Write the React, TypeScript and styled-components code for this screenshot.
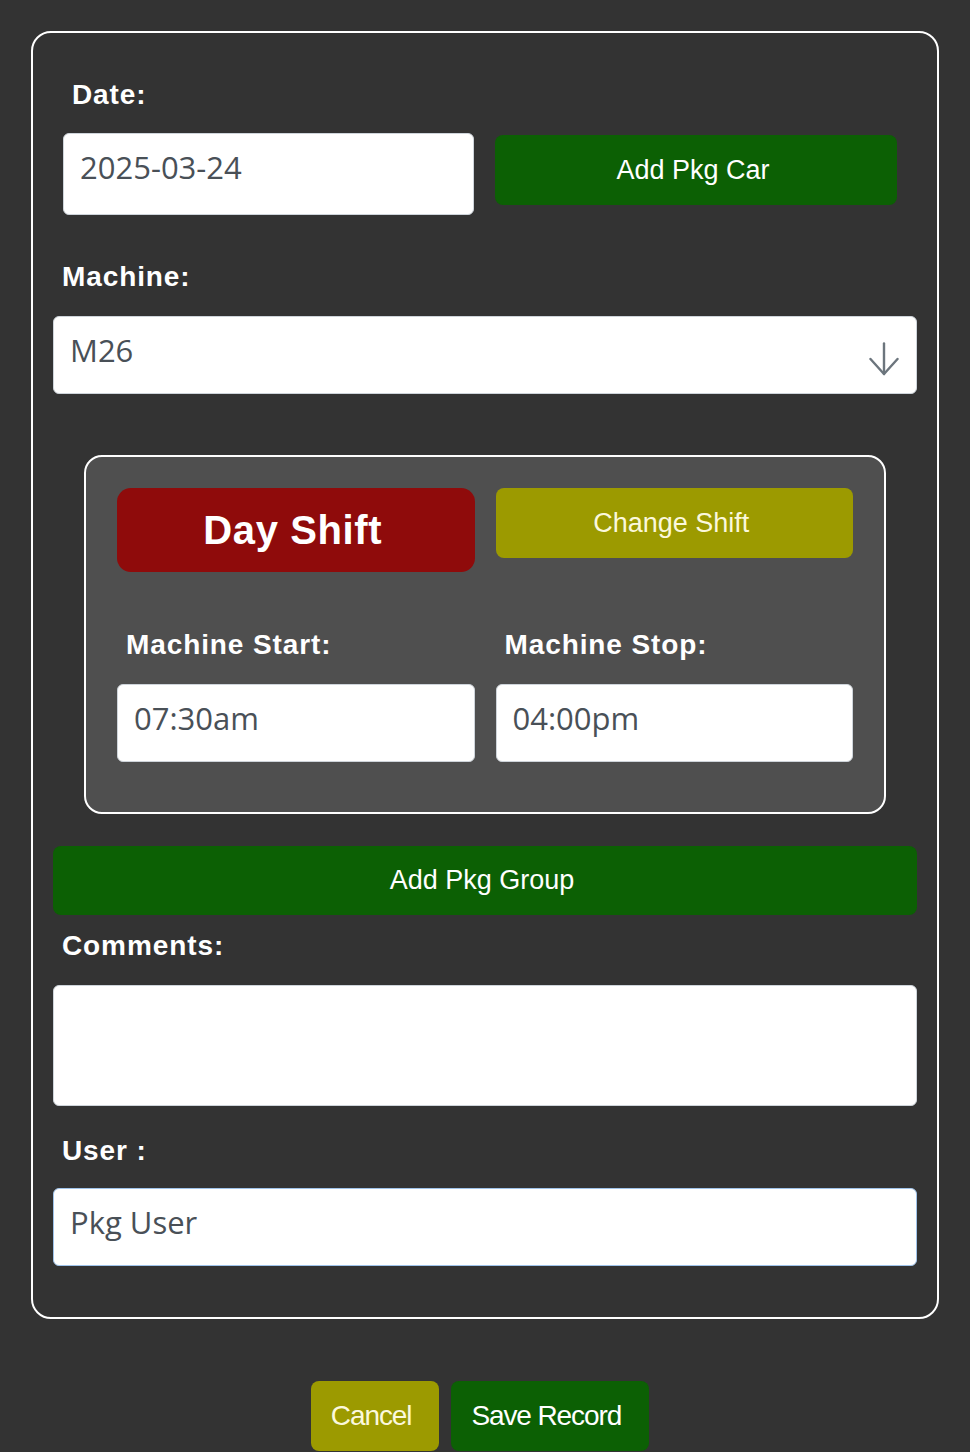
import React from "react";
import styled, { createGlobalStyle } from "styled-components";

const GlobalStyle = createGlobalStyle`
  html, body { margin: 0; padding: 0; background: #333333; }
  body { font-family: "Liberation Sans", Arial, sans-serif; }
  *, *::before, *::after { box-sizing: border-box; }
`;

const Page = styled.main`
  width: 970px;
  min-height: 1452px;
  padding: 31px 31px 0;
  background: #333333;
`;

const Card = styled.form`
  display: flex;
  flex-direction: column;
  border: 2px solid #ffffff;
  border-radius: 20px;
  padding: 46px 20px 51px;
`;

const Label = styled.label<{ $mt?: number }>`
  display: block;
  margin-top: ${(p) => p.$mt ?? 0}px;
  padding-left: 9px;
  font: bold 28px/32px "Liberation Sans", Arial, sans-serif;
  letter-spacing: 0.9px;
  color: #ffffff;
`;

const DateBlock = styled.section`
  padding: 0 10px;
`;

const DateRow = styled.div`
  display: grid;
  grid-template-columns: 411px 402px;
  column-gap: 21px;
  align-items: start;
  margin-top: 22px;
`;

const TextInput = styled.input<{ $h: number; $focus?: boolean }>`
  display: block;
  width: 100%;
  height: ${(p) => p.$h}px;
  padding: 12px 16px ${(p) => p.$h - 56}px;
  border: 1px solid ${(p) => (p.$focus ? "#9fc3ea" : "#ced4da")};
  border-radius: 6px;
  background: #ffffff;
  font: 400 31px/42px "Open Sans", "Noto Sans", sans-serif;
  color: #495057;
  outline: none;
`;

const TextArea = styled.textarea<{ $mt: number }>`
  display: block;
  width: 100%;
  height: 121px;
  margin-top: ${(p) => p.$mt}px;
  padding: 12px 16px;
  border: 1px solid #ced4da;
  border-radius: 6px;
  background: #ffffff;
  font: 400 31px/42px "Open Sans", "Noto Sans", sans-serif;
  color: #495057;
  resize: none;
  outline: none;
`;

const FieldSpace = styled.div<{ $mt: number }>`
  margin-top: ${(p) => p.$mt}px;
`;

const SelectWrap = styled.div`
  display: flex;
  align-items: center;
  height: 78px;
  margin-top: 23px;
  padding-right: 17px;
  border: 1px solid #ced4da;
  border-radius: 6px;
  background: #ffffff;
`;

const Select = styled.select`
  flex: 1;
  align-self: stretch;
  appearance: none;
  -webkit-appearance: none;
  border: none;
  background: transparent;
  padding: 12px 16px 22px;
  font: 400 31px/42px "Open Sans", "Noto Sans", sans-serif;
  color: #495057;
  outline: none;
`;

const ArrowIcon = styled.svg`
  flex: none;
  width: 30px;
  height: 34px;
  margin-top: 8px;
`;

const Button = styled.button<{ $bg: string; $h: number; $color?: string; $mt?: number }>`
  display: flex;
  align-items: center;
  justify-content: center;
  width: 100%;
  height: ${(p) => p.$h}px;
  margin-top: ${(p) => p.$mt ?? 0}px;
  padding: 0 6px 0 0;
  border: none;
  border-radius: 8px;
  background: ${(p) => p.$bg};
  color: ${(p) => p.$color ?? "#ffffff"};
  font: 400 27px/1 "Liberation Sans", Arial, sans-serif;
  cursor: pointer;
`;

const ShiftBadge = styled.div`
  display: flex;
  align-items: center;
  justify-content: center;
  height: 84px;
  padding-right: 6px;
  border-radius: 14px;
  background: #8f0b0b;
  color: #ffffff;
  font: bold 40px/1 "Liberation Sans", Arial, sans-serif;
  letter-spacing: 0.6px;
`;

const ShiftBox = styled.section`
  margin: 61px 31px 0;
  padding: 31px 31px 50px;
  border: 2px solid #ffffff;
  border-radius: 18px;
  background: #4f4f4f;
`;

const ShiftRow = styled.div<{ $mt?: number }>`
  display: grid;
  grid-template-columns: 1fr 1fr;
  column-gap: 21px;
  align-items: start;
  margin-top: ${(p) => p.$mt ?? 0}px;
`;

const Actions = styled.div`
  display: flex;
  justify-content: center;
  gap: 12px;
  margin-top: 62px;
  padding-right: 10px;
`;

const ActionButton = styled.button<{ $bg: string; $color: string }>`
  height: 70px;
  padding: 0 28px 0 20px;
  border: none;
  border-radius: 8px;
  background: ${(p) => p.$bg};
  color: ${(p) => p.$color};
  font: 400 28px/1 "Liberation Sans", Arial, sans-serif;
  letter-spacing: -1.1px;
  cursor: pointer;
`;

export default function App() {
  return (
    <>
      <GlobalStyle />
      <Page>
        <Card onSubmit={(e) => e.preventDefault()}>
          <DateBlock>
            <Label htmlFor="date">Date:</Label>
            <DateRow>
              <TextInput id="date" $h={82} defaultValue="2025-03-24" readOnly />
              <Button type="button" $bg="#0c6004" $h={70} $mt={2}>
                Add Pkg Car
              </Button>
            </DateRow>
          </DateBlock>

          <Label htmlFor="machine" $mt={46}>
            Machine:
          </Label>
          <SelectWrap>
            <Select id="machine" defaultValue="M26">
              <option value="M26">M26</option>
            </Select>
            <ArrowIcon viewBox="0 0 30 34" fill="none" stroke="#6c757d" strokeWidth="2.4" strokeLinecap="round" strokeLinejoin="round">
              <path d="M15 1.5V32" />
              <path d="M1.5 17L15 32L28.5 17" />
            </ArrowIcon>
          </SelectWrap>

          <ShiftBox>
            <ShiftRow>
              <ShiftBadge>Day Shift</ShiftBadge>
              <Button type="button" $bg="#9c9a00" $h={70} $color="#fbf8dc">
                Change Shift
              </Button>
            </ShiftRow>
            <ShiftRow $mt={57}>
              <Label htmlFor="start">Machine Start:</Label>
              <Label htmlFor="stop">Machine Stop:</Label>
            </ShiftRow>
            <ShiftRow $mt={23}>
              <TextInput id="start" $h={78} defaultValue="07:30am" readOnly />
              <TextInput id="stop" $h={78} defaultValue="04:00pm" readOnly />
            </ShiftRow>
          </ShiftBox>

          <Button type="button" $bg="#0c6004" $h={69} $mt={32}>
            Add Pkg Group
          </Button>

          <Label htmlFor="comments" $mt={15}>
            Comments:
          </Label>
          <TextArea id="comments" $mt={23} />

          <Label htmlFor="user" $mt={29}>
            User :
          </Label>
          <FieldSpace $mt={21}>
            <TextInput id="user" $h={78} $focus defaultValue="Pkg User" readOnly />
          </FieldSpace>
        </Card>

        <Actions>
          <ActionButton type="button" $bg="#9c9a00" $color="#fbf8dc">
            Cancel
          </ActionButton>
          <ActionButton type="button" $bg="#0c6004" $color="#ffffff">
            Save Record
          </ActionButton>
        </Actions>
      </Page>
    </>
  );
}
